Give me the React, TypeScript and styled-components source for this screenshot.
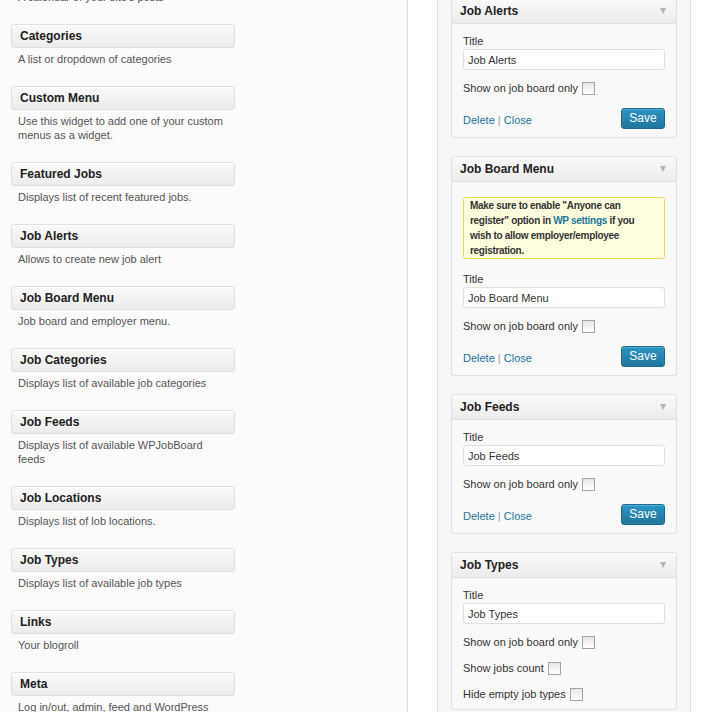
import React from "react";
import styled, { createGlobalStyle } from "styled-components";

const GlobalStyle = createGlobalStyle`
  html, body { margin: 0; padding: 0; background: #ffffff; }
  body {
    font-family: "Liberation Sans", Arial, sans-serif;
    color: #333;
    overflow: hidden;
  }
  * { box-sizing: border-box; }
`;

const Page = styled.div`
  display: flex;
  height: 712px;
  width: 702px;
  overflow: hidden;
  background: #fff;
`;

const AvailablePanel = styled.div`
  width: 408px;
  flex: none;
  background: #fbfbfb;
  border-right: 1px solid #dfdfdf;
  padding-left: 11px;
`;

const AvailableList = styled.div`
  margin-top: -38px;
  width: 224px;
  display: flex;
  flex-direction: column;
`;

const AvailableItem = styled.div`
  margin-bottom: 20px;
`;

const ItemHeader = styled.div`
  height: 24px;
  border: 1px solid #dfdfdf;
  border-radius: 3px;
  background: linear-gradient(to bottom, #f9f9f9, #ececec);
  font-size: 12px;
  font-weight: bold;
  color: #222;
  padding-left: 8px;
  line-height: 22px;
  box-shadow: inset 0 1px 0 #fff;
`;

const ItemDesc = styled.div`
  margin-top: 4px;
  padding-left: 7px;
  padding-right: 9px;
  font-size: 11px;
  line-height: 14px;
  color: #555;
`;

const Spacer = styled.div`
  width: 29px;
  flex: none;
  background: #fff;
`;

const Sidebar = styled.div`
  width: 254px;
  flex: none;
  border-left: 1px solid #dfdfdf;
  border-right: 1px solid #dfdfdf;
  background: #f7f7f7;
  padding: 0 13px;
`;

const WidgetList = styled.div`
  margin-top: -2px;
  display: flex;
  flex-direction: column;
  gap: 18px;
`;

const Widget = styled.div`
  width: 226px;
  border: 1px solid #dfdfdf;
  border-radius: 3px;
  background: #f9f9f9;
  box-shadow: inset 0 1px 0 #fff;
`;

const WidgetHeader = styled.div`
  height: 25px;
  display: flex;
  align-items: center;
  justify-content: space-between;
  padding: 0 8px;
  border-bottom: 1px solid #dfdfdf;
  background: linear-gradient(to bottom, #f9f9f9, #ececec);
  font-size: 12px;
  font-weight: bold;
  color: #222;
`;

const Arrow = styled.span`
  width: 0;
  height: 0;
  border-left: 3.5px solid transparent;
  border-right: 3.5px solid transparent;
  border-top: 6px solid #b4b4b4;
  margin-right: 2px;
`;

const WidgetBody = styled.div`
  padding: 10px 11px 8px 11px;
`;

const Notice = styled.div`
  margin: 5px 0 13px;
  background: #ffffe0;
  border: 1px solid #e6db55;
  border-radius: 3px;
  padding: 0 16px 0 6px;
  font-size: 10px;
  font-weight: bold;
  letter-spacing: -0.3px;
  line-height: 15px;
  color: #333;
  a { color: #21759b; text-decoration: none; }
`;

const Label = styled.div`
  font-size: 11px;
  line-height: 14px;
  color: #333;
`;

const TextInput = styled.input`
  display: block;
  width: 100%;
  height: 21px;
  margin-top: 1px;
  border: 1px solid #dfdfdf;
  border-radius: 3px;
  background: #fff;
  font-family: "Liberation Sans", Arial, sans-serif;
  font-size: 11px;
  color: #333;
  padding: 0 4px;
  outline: none;
`;

const CheckRow = styled.label<{ $first?: boolean }>`
  display: flex;
  align-items: center;
  margin-top: ${(p) => (p.$first ? "11px" : "12px")};
  height: 14px;
  font-size: 11px;
  color: #333;
`;

const Check = styled.span`
  display: inline-block;
  width: 13px;
  height: 13px;
  margin-left: 4px;
  margin-top: 1px;
  border: 1px solid #a4a4a4;
  background: linear-gradient(to bottom, #e6e6e6, #ffffff);
`;

const Actions = styled.div`
  display: flex;
  align-items: center;
  justify-content: space-between;
  margin-top: 13px;
`;

const Links = styled.div`
  font-size: 11px;
  color: #999;
  padding-top: 2px;
  a { color: #21759b; text-decoration: none; }
`;

const SaveButton = styled.button`
  width: 44px;
  height: 21px;
  border: 1px solid #1e6a8d;
  border-radius: 3px;
  background: linear-gradient(to bottom, #2a95c5, #21759b);
  color: #fff;
  font-family: "Liberation Sans", Arial, sans-serif;
  font-size: 12px;
  padding: 0 0 2px;
  box-shadow: inset 0 1px 0 rgba(120, 200, 230, 0.5);
`;

const available: { title: string; desc: string }[] = [
  { title: "Calendar", desc: "A calendar of your site's posts" },
  { title: "Categories", desc: "A list or dropdown of categories" },
  { title: "Custom Menu", desc: "Use this widget to add one of your custom menus as a widget." },
  { title: "Featured Jobs", desc: "Displays list of recent featured jobs." },
  { title: "Job Alerts", desc: "Allows to create new job alert" },
  { title: "Job Board Menu", desc: "Job board and employer menu." },
  { title: "Job Categories", desc: "Displays list of available job categories" },
  { title: "Job Feeds", desc: "Displays list of available WPJobBoard feeds" },
  { title: "Job Locations", desc: "Displays list of lob locations." },
  { title: "Job Types", desc: "Displays list of available job types" },
  { title: "Links", desc: "Your blogroll" },
  { title: "Meta", desc: "Log in/out, admin, feed and WordPress links" },
];

type W = { title: string; notice?: boolean; extra?: string[]; actions?: boolean };

const widgets: W[] = [
  { title: "Job Alerts", actions: true },
  { title: "Job Board Menu", notice: true, actions: true },
  { title: "Job Feeds", actions: true },
  { title: "Job Types", extra: ["Show jobs count", "Hide empty job types"] },
];

export default function App() {
  return (
    <>
      <GlobalStyle />
      <Page>
        <AvailablePanel>
          <AvailableList>
            {available.map((a) => (
              <AvailableItem key={a.title}>
                <ItemHeader>{a.title}</ItemHeader>
                <ItemDesc>{a.desc}</ItemDesc>
              </AvailableItem>
            ))}
          </AvailableList>
        </AvailablePanel>
        <Spacer />
        <Sidebar>
          <WidgetList>
            {widgets.map((w) => (
              <Widget key={w.title}>
                <WidgetHeader>
                  <span>{w.title}</span>
                  <Arrow />
                </WidgetHeader>
                <WidgetBody>
                  {w.notice && (
                    <Notice>
                      Make sure to enable "Anyone can register" option in{" "}
                      <a href="#">WP settings</a> if you wish to allow employer/employee
                      registration.
                    </Notice>
                  )}
                  <Label>Title</Label>
                  <TextInput defaultValue={w.title} readOnly />
                  <CheckRow $first>
                    Show on job board only <Check />
                  </CheckRow>
                  {w.extra?.map((e) => (
                    <CheckRow key={e}>
                      {e} <Check />
                    </CheckRow>
                  ))}
                  {w.actions && (
                    <Actions>
                      <Links>
                        <a href="#">Delete</a> | <a href="#">Close</a>
                      </Links>
                      <SaveButton>Save</SaveButton>
                    </Actions>
                  )}
                </WidgetBody>
              </Widget>
            ))}
          </WidgetList>
        </Sidebar>
      </Page>
    </>
  );
}
